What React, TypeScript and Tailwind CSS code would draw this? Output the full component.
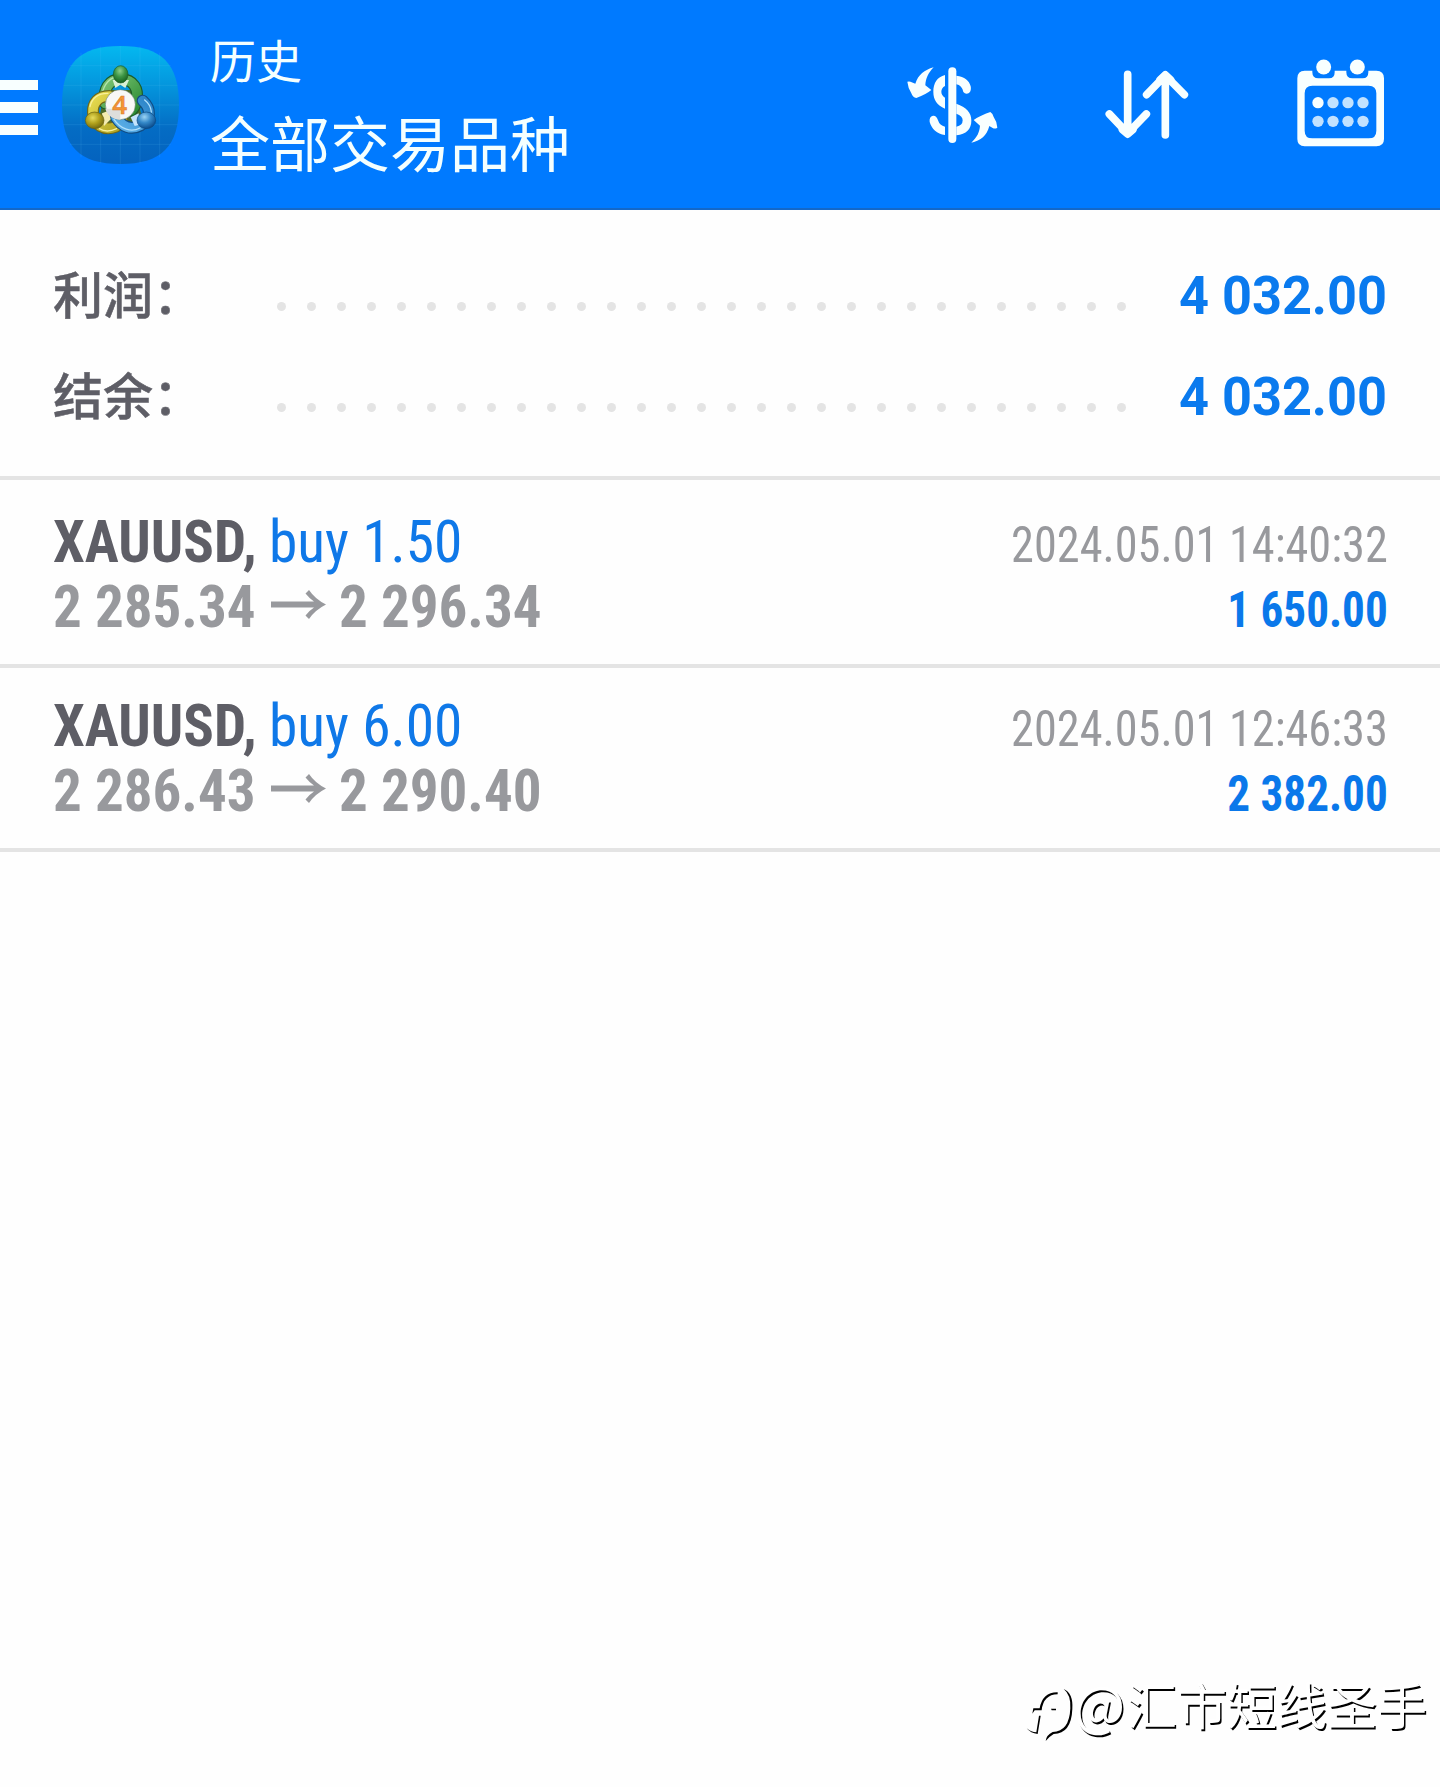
const CJK = "font-['Noto_Sans_CJK_SC',sans-serif]";
const CONDENSED = "font-['Roboto_Condensed','Roboto',sans-serif] [font-stretch:75%]";

function AppLogo() {
  const green = "M149 190C142 146 162 118 196 117C236 118 250 148 244 182Q240 200 228 212";
  const yellow = "M162 168C128 168 111 190 113 218C116 256 146 274 182 260L200 238";
  const blue = "M182 232C200 260 226 272 256 256C288 238 288 206 262 182";
  return (
    <svg className="h-[118px] w-[117px] shrink-0" viewBox="20 18 351 354" preserveAspectRatio="none">
      <defs>
        <linearGradient id="tile" x1="0" y1="0" x2="0" y2="1">
          <stop offset="0" stopColor="#04b8f0" />
          <stop offset="0.35" stopColor="#0494dc" />
          <stop offset="0.7" stopColor="#046cc4" />
          <stop offset="1" stopColor="#0462be" />
        </linearGradient>
        <linearGradient id="greenBody" x1="0" y1="0" x2="1" y2="1">
          <stop offset="0" stopColor="#7cc474" />
          <stop offset="1" stopColor="#2c8c34" />
        </linearGradient>
        <linearGradient id="yellowBody" x1="0" y1="0" x2="1" y2="1">
          <stop offset="0" stopColor="#e8dc50" />
          <stop offset="1" stopColor="#b0a424" />
        </linearGradient>
        <linearGradient id="blueBody" x1="0" y1="1" x2="1" y2="0">
          <stop offset="0" stopColor="#5cb0e8" />
          <stop offset="1" stopColor="#2c84c8" />
        </linearGradient>
        <radialGradient id="greenBall" cx="0.45" cy="0.3" r="0.7">
          <stop offset="0" stopColor="#8fd08a" />
          <stop offset="0.5" stopColor="#3c9444" />
          <stop offset="1" stopColor="#17601f" />
        </radialGradient>
        <radialGradient id="yellowBall" cx="0.4" cy="0.35" r="0.7">
          <stop offset="0" stopColor="#e6dc5c" />
          <stop offset="0.5" stopColor="#b0a01c" />
          <stop offset="1" stopColor="#6c6410" />
        </radialGradient>
        <radialGradient id="blueBall" cx="0.4" cy="0.3" r="0.7">
          <stop offset="0" stopColor="#9cd4f4" />
          <stop offset="0.5" stopColor="#3488c8" />
          <stop offset="1" stopColor="#0c4c8c" />
        </radialGradient>
      </defs>
      <path d="M20 195C20 70 72 18 195 18S371 70 371 195 318 372 195 372 20 320 20 195Z" fill="url(#tile)" />
      <g stroke="#6cc8f4" strokeOpacity="0.2" strokeWidth="2">
        <path d="M77 38V352M136 20V370M195 18V372M254 20V370M313 38V352" />
        <path d="M44 77H346M24 136H367M20 195H371M24 254H367M44 313H346" />
      </g>
      <path d="M150 150H240L262 240L196 262L130 240Z" fill="#4c6c28" />
      <g strokeLinecap="round" strokeLinejoin="round" fill="none">
        <path d={green} stroke="#1c5c28" strokeWidth="36" />
        <path d={green} stroke="url(#greenBody)" strokeWidth="29" />
        <path d="M140 166C144 132 164 110 196 108" stroke="#b4e4ac" strokeWidth="4" />
        <path d={yellow} stroke="#706818" strokeWidth="36" />
        <path d={yellow} stroke="url(#yellowBody)" strokeWidth="29" />
        <path d="M104 200C110 172 132 160 158 160M132 266Q154 280 184 266" stroke="#f8f09c" strokeWidth="4" />
        <path d={blue} stroke="#104c84" strokeWidth="36" />
        <path d={blue} stroke="url(#blueBody)" strokeWidth="29" />
        <path d="M176 238C196 268 228 278 254 264M288 216Q286 194 268 180" stroke="#b0e0fc" strokeWidth="4" />
      </g>
      <path d="M172 120L180 144L195 134L210 144L221 120Z" fill="#d8f0d4" />
      <path d="M140 220L160 212L166 238L146 258Z" fill="#f4ecb0" />
      <path d="M226 232L250 220L252 254L238 258Z" fill="#c4e4fc" />
      <ellipse cx="196" cy="103" rx="22" ry="26" fill="url(#greenBall)" stroke="#1c5a24" strokeWidth="2" />
      <ellipse cx="118" cy="241" rx="28" ry="25" fill="url(#yellowBall)" stroke="#686010" strokeWidth="2" />
      <ellipse cx="273" cy="241" rx="28" ry="25" fill="url(#blueBall)" stroke="#0c4880" strokeWidth="2" />
      <circle cx="195" cy="194" r="45" fill="#f8f8f6" stroke="#54705c" strokeWidth="1.5" />
      <path d="M150 206H195V239A45 45 0 0 1 150 206Z" fill="#dededc" />
      <text x="193" y="221" textAnchor="middle" fontFamily="Open Sans, sans-serif" fontSize="78" fontWeight="600" fill="#f49434" stroke="#d87c2c" strokeWidth="1.5">4</text>
    </svg>
  );
}

function DollarIcon() {
  return (
    <svg className="h-[76px] w-[91px] shrink-0" viewBox="80 81 273 228" fill="#f8ffff">
      <path d="M160 82C144 99 136 115 135 136L153 150Q139 162 108 174Q97 172 93 160Q83 144 81 125Q89 123 94 127L105 131C114 104 132 90 160 82Z" />
      <path d="M273 308C291 290 297 278 299 257L280 240Q300 226 330 216Q339 222 340 231Q350 245 351 263Q344 268 337 264L327 258C319 287 302 302 273 308Z" />
      <rect x="204" y="82" width="24" height="227" rx="12" />
      <path d="M194 105V138Q183 144 183 155Q183 166 194 173V206C170 195 159 180 159 155C159 129 171 111 194 105Z" />
      <path d="M228 107C253 110 266 121 271 139Q274 152 266 159Q256 165 249 156Q245 136 228 133Z" />
      <path d="M228 191C258 202 273 217 273 242C273 267 258 282 228 286V260Q247 257 247 241Q247 227 228 221Z" />
      <path d="M194 285C170 282 154 267 148 246Q146 230 158 227Q169 226 173 241Q178 257 194 260Z" />
    </svg>
  );
}

function SortIcon() {
  return (
    <svg className="h-[70px] w-[84px] shrink-0" viewBox="676 91 252 210" fill="none" stroke="#f8ffff" strokeWidth="23" strokeLinecap="round" strokeLinejoin="round">
      <path d="M744 104V278M689 223L744 281L800 223" />
      <path d="M857 286V112M801 165L857 107L914 165" />
      <path d="M728 270L744 284L760 270M841 120L857 105L873 120" strokeWidth="22" />
    </svg>
  );
}

function CalendarIcon() {
  const columns = [143, 188, 233, 278];
  return (
    <svg className="h-[88px] w-[88px] shrink-0" viewBox="80 58 264 264">
      <path
        fill="#f8ffff"
        fillRule="evenodd"
        d="M103 93H126V98Q126 116 144 116H176Q193 116 193 98V93H228V98Q228 116 246 116H277Q294 116 294 98V93H318Q341 93 341 116V298Q341 320 318 320H103Q81 320 81 298V116Q81 93 103 93ZM126 138Q103 138 103 161V273Q103 296 126 296H295Q318 296 318 273V161Q318 138 295 138Z"
      />
      <circle cx="160" cy="82" r="22.5" fill="#f8ffff" />
      <circle cx="261" cy="82" r="22.5" fill="#f8ffff" />
      {columns.map((x, i) => (
        <g key={x}>
          <circle cx={x} cy="189" r="17" fill={i === 0 ? "#f8ffff" : "#c2e2ff"} />
          <circle cx={x} cy="245" r="17" fill="#c2e2ff" />
        </g>
      ))}
    </svg>
  );
}

function Header() {
  return (
    <header className="flex h-[210px] items-start border-b-2 border-[#1468c8] bg-[#007aff] text-[#f4ffff]">
      <div className="mt-20 flex w-[38px] shrink-0 flex-col gap-3">
        <span className="h-2.5 bg-[#f8ffff]" />
        <span className="h-[11px] bg-[#f8ffff]" />
        <span className="h-2.5 bg-[#f8ffff]" />
      </div>
      <div className="mt-[46px] ml-6">
        <AppLogo />
      </div>
      <div className={`mt-[26px] ml-[31px] ${CJK}`}>
        <div className="text-[46px] leading-[64px]">历史</div>
        <div className="text-[60px] leading-[102px]">全部交易品种</div>
      </div>
      <div className="ml-auto flex">
        <div className="mt-[67px]"><DollarIcon /></div>
        <div className="mt-[70px] ml-[107px]"><SortIcon /></div>
        <div className="mt-[59px] mr-[55px] ml-[108px]"><CalendarIcon /></div>
      </div>
    </header>
  );
}

function SummaryRow({ label, value }: { label: string; value: string }) {
  return (
    <div className="flex h-[101px] items-center pr-[53px] pl-[53px]">
      <div className={`-mt-[5px] w-[224px] text-[50px] leading-[101px] font-medium text-[#5e5e66] [-webkit-text-stroke:0.5px_#5e5e66] ${CJK}`}>
        {label}
      </div>
      <div className="mt-6 flex gap-[21px]">
        {Array.from({ length: 29 }, (_, i) => (
          <span key={i} className="size-[9px] rounded-full bg-[#e4e4e4]" />
        ))}
      </div>
      <div className="mt-[3px] ml-auto origin-right scale-x-[0.986] font-['Roboto',sans-serif] text-[53px] leading-[101px] font-bold whitespace-nowrap text-[#0a7aee]">
        {value}
      </div>
    </div>
  );
}

type Deal = { volume: string; from: string; to: string; time: string; profit: string };

const deals: Deal[] = [
  { volume: "1.50", from: "2 285.34", to: "2 296.34", time: "2024.05.01 14:40:32", profit: "1 650.00" },
  { volume: "6.00", from: "2 286.43", to: "2 290.40", time: "2024.05.01 12:46:33", profit: "2 382.00" },
];

function DealRow({ deal }: { deal: Deal }) {
  return (
    <div className={`flex h-[184px] justify-between border-b-4 border-[#e4e4e4] pr-[52px] pl-[53px] whitespace-nowrap ${CONDENSED}`}>
      <div className="pt-[25px] text-[60px] leading-[65px]">
        <div className="flex">
          <div className="w-[216px] origin-left scale-x-[0.948] font-bold text-[#5e5e66]">XAUUSD,</div>
          <div className="origin-left scale-x-[0.957] text-[#0f78e8]">buy {deal.volume}</div>
        </div>
        <div className="flex font-bold text-[#98999d]">
          <div className="w-[218px] origin-left scale-x-[0.95]">{deal.from}</div>
          <svg className="mt-4 mr-[13px] h-[29px] w-[55px]" viewBox="0 0 55 29" fill="#98999d">
            <path d="M38 0Q44 9 55 14.5Q44 20 38 29L34.5 25.5Q39 20 43 17.5H0V11.5H43Q39 9 34.5 3.5Z" />
          </svg>
          <div className="origin-left scale-x-[0.95]">{deal.to}</div>
        </div>
      </div>
      <div className="pt-[28.5px] text-right text-[50px] leading-[65px]">
        <div className="origin-right scale-x-[0.926] text-[#98999d]">{deal.time}</div>
        <div className="origin-right scale-x-[0.903] font-bold text-[#0a78ea]">{deal.profit}</div>
      </div>
    </div>
  );
}

function Watermark() {
  return (
    <div className={`mt-auto mr-[13px] mb-11 flex items-center justify-end text-[50px] leading-[80px] text-white [text-shadow:1.5px_1.5px_0_#000] ${CJK}`}>
      <svg className="mt-6 h-[54px] w-[48px]" viewBox="70 85 144 162" fill="#000">
        <path d="M165 98Q120 97 111 146H92L89 162L96 152H117Q122 105 165 104Z" />
        <path d="M109 168L101 218Q86 218 72 206Q84 221 105 223L114 168Z" />
        <path d="M145 147H160V152H147Z" />
        <path d="M183 88Q212 100 209 148Q206 222 153 223Q138 232 129 244Q131 226 150 217Q200 216 203 146Q205 105 183 88Z" />
      </svg>
      <span className="mr-0.5 text-[54px]">@</span>
      <span>汇市短线圣手</span>
    </div>
  );
}

export default function App() {
  return (
    <div className="flex h-[1787px] w-[1440px] flex-col overflow-hidden bg-[#fefefe]">
      <Header />
      <section className="mb-1 h-[270px] border-b-4 border-[#e4e4e4] pt-[34px]">
        <SummaryRow label="利润：" value="4 032.00" />
        <SummaryRow label="结余：" value="4 032.00" />
      </section>
      {deals.map((deal) => (
        <DealRow key={deal.time} deal={deal} />
      ))}
      <Watermark />
    </div>
  );
}
